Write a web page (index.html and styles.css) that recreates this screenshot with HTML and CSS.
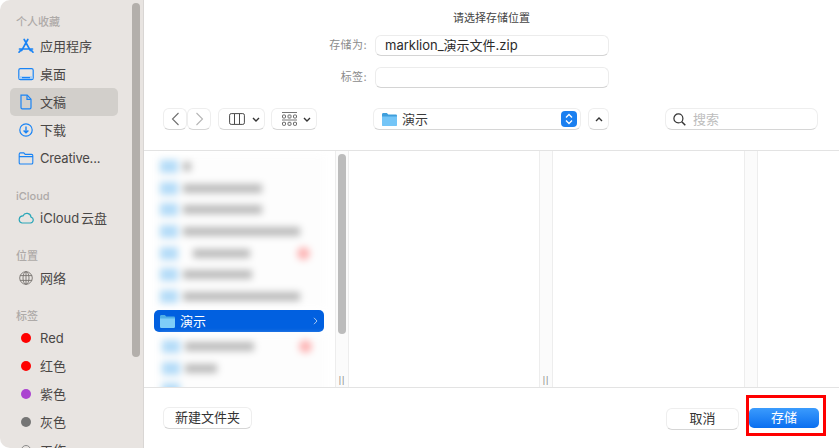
FILE: index.html
```html
<!DOCTYPE html>
<html lang="zh">
<head>
<meta charset="utf-8">
<title>存储</title>
<link rel="stylesheet" href="styles.css">
</head>
<body>
<div class="window">
  <aside class="sidebar">
    <div class="sb-label first">个人收藏</div>
    <div class="sb-row"><svg class="ic" viewBox="0 0 16 16"><path d="M9.8 1.5 3.6 12.6M6.2 1.5l6.2 11.1M1.5 11h13M1 14.2l1.4-1.6M15 14.2l-1.4-1.6" fill="none" stroke="#1a84f5" stroke-width="1.7" stroke-linecap="round"/></svg><span>应用程序</span></div>
    <div class="sb-row"><svg class="ic" viewBox="0 0 16 16"><rect x=".8" y="2.6" width="14.4" height="11" rx="1.6" fill="none" stroke="#1a84f5" stroke-width="1.2"/><path d="M1.5 10.2h13v2.7h-13z" fill="#a8cff5"/><path d="M4 11.6h8" stroke="#1a84f5" stroke-width="1.2"/></svg><span>桌面</span></div>
    <div class="sb-row selected"><svg class="ic" viewBox="0 0 16 16"><path d="M3 1.2h6.2L13 5.2v8.4a1.3 1.3 0 0 1-1.3 1.3H4.3A1.3 1.3 0 0 1 3 13.6z" fill="none" stroke="#1a84f5" stroke-width="1.2"/><path d="M9 1.5v3.8h3.8" fill="none" stroke="#1a84f5" stroke-width="1.2"/></svg><span>文稿</span></div>
    <div class="sb-row"><svg class="ic" viewBox="0 0 16 16"><circle cx="8" cy="8" r="6.2" fill="none" stroke="#1a84f5" stroke-width="1.2"/><path d="M8 4.4v6.2M5.6 8.4 8 10.8l2.4-2.4" fill="none" stroke="#1a84f5" stroke-width="1.4"/></svg><span>下载</span></div>
    <div class="sb-row"><svg class="ic" viewBox="0 0 16 16"><path d="M1.2 4.2c0-.8.5-1.3 1.2-1.3h3.4l1.4 1.5h6.4c.8 0 1.2.5 1.2 1.2v7.1c0 .8-.5 1.3-1.2 1.3H2.4c-.8 0-1.2-.5-1.2-1.3zM1.2 6.6h13.6" fill="none" stroke="#1a84f5" stroke-width="1.1"/></svg><span class="tight">Creative...</span></div>
    <div class="sb-label">iCloud</div>
    <div class="sb-row"><svg class="ic" viewBox="0 0 16 16"><path d="M4 13h8.4a3 3 0 0 0 .6-5.9A4.2 4.2 0 0 0 5 5.9 3.6 3.6 0 0 0 4 13z" fill="none" stroke="#2aa6b8" stroke-width="1.2"/></svg><span class="narrow-space">iCloud 云盘</span></div>
    <div class="sb-label">位置</div>
    <div class="sb-row"><svg class="ic" viewBox="0 0 16 16"><g fill="none" stroke="#77736f" stroke-width=".9"><circle cx="8" cy="8" r="6.3"/><ellipse cx="8" cy="8" rx="3" ry="6.3"/><path d="M2 5.6h12M2 10.4h12M8 1.7v12.6"/></g></svg><span>网络</span></div>
    <div class="sb-label">标签</div>
    <div class="sb-row"><i class="dot red"></i><span>Red</span></div>
    <div class="sb-row"><i class="dot red"></i><span>红色</span></div>
    <div class="sb-row"><i class="dot purple"></i><span>紫色</span></div>
    <div class="sb-row"><i class="dot gray"></i><span>灰色</span></div>
    <div class="sb-row"><i class="dot hollow"></i><span>工作</span></div>
    <div class="sb-thumb"></div>
  </aside>
  <main class="panel">
    <header class="head">
      <div class="title">请选择存储位置</div>
      <div class="form-row"><label>存储为:</label><div class="field">marklion_演示文件.zip</div></div>
      <div class="form-row tags"><label>标签:</label><div class="field"></div></div>
      <div class="toolbar">
        <div class="btn nav back"><svg width="9" height="14" viewBox="0 0 9 14"><path d="M7.5 1 1.5 7l6 6" fill="none" stroke="#6f6f6f" stroke-width="1.1"/></svg></div>
        <div class="btn nav fwd"><svg width="9" height="14" viewBox="0 0 9 14"><path d="M1.5 1l6 6-6 6" fill="none" stroke="#b5b5b5" stroke-width="1.1"/></svg></div>
        <div class="btn view"><svg width="16" height="12" viewBox="0 0 16 12"><rect x=".6" y=".6" width="14.8" height="10.8" rx="1.6" fill="none" stroke="#4a4a4a" stroke-width="1"/><path d="M5.5 1v10M10.5 1v10" stroke="#4a4a4a" stroke-width="1"/></svg><svg class="chev" width="8" height="5" viewBox="0 0 8 5"><path d="M1 1l3 3 3-3" fill="none" stroke="#333" stroke-width="1.4"/></svg></div>
        <div class="btn group"><svg width="15" height="14" viewBox="0 0 15 14"><path d="M0 .5h15M0 8h15" stroke="#666" stroke-width=".9"/><g fill="none" stroke="#555" stroke-width=".9"><rect x=".5" y="3" width="3" height="3" rx=".7"/><rect x="6" y="3" width="3" height="3" rx=".7"/><rect x="11.500" y="3" width="3" height="3" rx=".7"/><rect x=".5" y="10.300" width="3" height="3" rx=".7"/><rect x="6" y="10.300" width="3" height="3" rx=".7"/><rect x="11.500" y="10.300" width="3" height="3" rx=".7"/></g></svg><svg class="chev" width="8" height="5" viewBox="0 0 8 5"><path d="M1 1l3 3 3-3" fill="none" stroke="#333" stroke-width="1.4"/></svg></div>
        <div class="btn path">
          <svg class="folder" width="15" height="13" viewBox="0 0 15 13"><path d="M0 1.500C0 .6.500 0 1.400 0h3.500l1.300 1.400h7.400c.9 0 1.400.5 1.400 1.400V11.600c0 .9-.5 1.400-1.400 1.400H1.400C.5 13 0 12.500 0 11.600z" fill="#3f9fdc"/><path d="M0 3.400h15v8.200c0 .9-.5 1.400-1.400 1.400H1.400C.5 13 0 12.500 0 11.600z" fill="#74c5f7"/></svg>
          <span class="path-name">演示</span>
          <span class="stepper"><svg width="8" height="12" viewBox="0 0 8 12"><path d="M1 4.500 4 1.500l3 3M1 7.500l3 3 3-3" fill="none" stroke="#fff" stroke-width="1.300"/></svg></span>
        </div>
        <div class="btn up"><svg width="8" height="5" viewBox="0 0 8 5"><path d="M1 4l3-3 3 3" fill="none" stroke="#333" stroke-width="1.4"/></svg></div>
        <div class="btn search"><svg width="13" height="13" viewBox="0 0 13 13"><circle cx="5.400" cy="5.400" r="4.500" fill="none" stroke="#333" stroke-width="1.200"/><path d="M8.800 8.800 12.300 12.300" stroke="#333" stroke-width="1.500"/></svg><span>搜索</span></div>
      </div>
    </header>
    <section class="browser">
      <div class="col col-first">
        <div class="blur-list top">
          <div class="f-row"><i></i><b class="w1"></b></div>
          <div class="f-row"><i></i><b class="w2"></b></div>
          <div class="f-row"><i></i><b class="w2"></b></div>
          <div class="f-row"><i></i><b class="w3"></b></div>
          <div class="f-row"><i></i><b class="w4 inset"></b><u></u></div>
          <div class="f-row"><i></i><b class="w6"></b></div>
          <div class="f-row"><i></i><b class="w3"></b></div>
        </div>
        <div class="sel-row">
          <svg width="15" height="13" viewBox="0 0 15 13"><path d="M0 1.500C0 .6.500 0 1.400 0h3.500l1.300 1.400h7.400c.9 0 1.400.5 1.400 1.400V11.600c0 .9-.5 1.400-1.400 1.400H1.400C.5 13 0 12.500 0 11.600z" fill="#4faee6"/><path d="M0 3.400h15v8.200c0 .9-.5 1.400-1.400 1.400H1.400C.5 13 0 12.500 0 11.600z" fill="#7fcdf8"/></svg>
          <span>演示</span>
          <svg class="sel-chev" width="5" height="8" viewBox="0 0 5 8"><path d="M1 .8 4 4 1 7.200" fill="none" stroke="#a8c8f0" stroke-width="1"/></svg>
        </div>
        <div class="blur-list bottom">
          <div class="f-row"><i></i><b class="w6"></b><u></u></div>
          <div class="f-row"><i></i><b class="w5"></b></div>
          <div class="f-row"><i></i></div>
        </div>
      </div>
      <div class="rail"><div class="rail-thumb"></div><div class="grip">||</div></div>
      <div class="col"></div>
      <div class="rail"><div class="grip">||</div></div>
      <div class="col"></div>
      <div class="rail"></div>
      <div class="col"></div>
    </section>
    <footer class="foot">
      <div class="btn new">新建文件夹</div>
      <div class="foot-right">
        <div class="btn cancel">取消</div>
        <div class="save-wrap"><div class="save">存储</div></div>
      </div>
    </footer>
  </main>
</div>
</body>
</html>
```
FILE: styles.css
```css
* { box-sizing: border-box; }
html, body { margin: 0; height: 448px; overflow: hidden; background: #fff; }
body { font-family: Inter, "Noto Sans CJK SC", "Liberation Sans", sans-serif; font-size: 13px; line-height: 16px; color: #3b3938; }
.window { display: flex; width: 839px; height: 448px; }

.sidebar { position: relative; width: 144px; flex: none; height: 448px; overflow: hidden; padding-top: 15px; background: #e8e4e1; border-right: 1px solid #d9d6d4; border-radius: 10px 0 0 10px; }
.sb-label { height: 14px; margin: 16.5px 0 1.5px 16px; font-size: 11px; line-height: 14px; font-weight: 500; color: #aeaaa8; }
.sb-label.first { margin-top: 0; margin-bottom: 3px; }
.sb-row { display: flex; align-items: center; height: 28px; margin: 0 25px 0 10px; padding-left: 8px; border-radius: 5px; white-space: nowrap; color: #4a4746; }
.sb-row span { margin-left: 6px; }
.sb-row span.tight { letter-spacing: -.2px; }
.sb-row span.narrow-space { word-spacing: -2px; }
.sb-row.selected { background: #d2cfcb; }
.ic { width: 16px; height: 16px; flex: none; }
.dot { width: 10px; height: 10px; flex: none; margin: 0 3px; border-radius: 50%; }
.dot.red { background: #fe0000; }
.dot.purple { background: #ab43d0; }
.dot.gray { background: #757575; }
.dot.hollow { border: 1px solid #8a8a8a; }
.sb-thumb { position: absolute; left: 132px; top: 3px; width: 8px; height: 354px; border-radius: 4px; background: #b3afab; }

.panel { flex: 1; min-width: 0; display: flex; flex-direction: column; height: 448px; }
.head { height: 151px; flex: none; border-bottom: 1px solid #e3e3e3; padding-top: 11px; }
.title { height: 14px; margin-bottom: 10px; text-align: center; font-size: 11px; line-height: 14px; color: #444; }
.form-row { display: flex; align-items: center; height: 20px; margin-bottom: 12px; }
.form-row label { width: 223px; text-align: right; font-size: 11px; color: #8c8c8c; margin-right: 8px; white-space: nowrap; letter-spacing: .4px; }
.field { width: 234px; height: 21px; padding-left: 9px; border: 1px solid #ececec; border-bottom-color: #d4d4d4; border-radius: 6px; background: #fff; color: #2b2b2b; line-height: 19px; font-size: 13px; }
.toolbar { display: flex; margin: 21px 0 0 19px; height: 22px; }
.btn { display: flex; align-items: center; background: #fff; border: 1px solid #eee; border-bottom-color: #d6d6d6; border-radius: 6px; }
.nav { width: 24px; height: 22px; justify-content: center; }
.view { width: 47px; margin-left: 7px; padding-left: 10px; }
.chev { margin-left: 6px; }
.view .chev { margin-left: 7px; }
.group { width: 46px; margin-left: 6px; padding-left: 10px; }
.path { width: 208px; margin-left: 56px; padding: 0 3px 0 8px; }
.path-name { margin-left: 5px; flex: 1; color: #3a3a3a; }
.stepper { display: flex; align-items: center; justify-content: center; width: 16px; height: 16px; background: #1a7ff0; border-radius: 4px; }
.up { width: 21px; margin-left: 7px; justify-content: center; }
.search { width: 153px; margin-left: 56px; padding-left: 7px; border-radius: 7px; }
.search span { margin-left: 7px; color: #bdbdbd; }

.browser { flex: 1; min-height: 0; display: flex; }
.col { width: 190px; flex: none; }
.col:nth-child(5) { width: 191px; }
.col:last-child { flex: 1; }
.col-first { width: 191px; padding: 5px 0 0 10px; overflow: hidden; }
.rail { position: relative; width: 14px; flex: none; border: 1px solid #ededed; border-width: 0 1px; background: #fbfbfb; }
.rail-thumb { position: absolute; left: 2px; top: 3px; width: 8px; height: 180px; border-radius: 4px; background: #bcbcbc; }
.grip { position: absolute; left: 0; right: 0; bottom: 1px; text-align: center; font: 9px/12px "Liberation Sans", sans-serif; color: #8a8a8a; letter-spacing: 1px; }

.blur-list { width: 168px; background: #fdfdfd; filter: blur(3.5px); }
.blur-list.top { margin-left: 2px; height: 152px; overflow: hidden; }
.blur-list.bottom { margin: 4px 0 0 4px; }
.f-row { position: relative; display: flex; align-items: center; height: 21.6px; padding-left: 4px; }
.f-row i { width: 18px; height: 13px; flex: none; background: #b4dcf8; }
.f-row b { height: 9px; margin-left: 5px; background: #bbb; }
.f-row b.inset { margin-left: 15px; }
.f-row u { position: absolute; right: 14px; width: 13px; height: 13px; border-radius: 50%; background: #fdb4b4; }
.w1 { width: 8px; }
.w2 { width: 79px; }
.w3 { width: 117px; }
.w4 { width: 57px; }
.w5 { width: 32px; background: #ccc; }
.w6 { width: 69px; }

.sel-row { position: relative; display: flex; align-items: center; height: 22px; margin-top: 2px; width: 170px; padding: 0 6px; background: #0160e0; border-radius: 5px; color: #fff; font-size: 13px; }
.sel-row span { margin-left: 5px; flex: 1; }

.foot { height: 61px; flex: none; display: flex; justify-content: space-between; padding: 0 20px 0 19px; border-top: 1px solid #e3e3e3; }
.new { width: 89px; height: 22px; margin-top: 19px; padding-bottom: 2px; justify-content: center; font-size: 13px; color: #333; }
.foot-right { display: flex; }
.cancel { width: 73px; height: 22px; margin-top: 20px; padding-bottom: 3px; justify-content: center; color: #333; }
.save-wrap { width: 80px; height: 41px; margin: 7px -7px 0 7px; border: 3px solid #fe0000; padding: 10px 0 0 0; background: #fff; }
.save { width: 70px; height: 20px; padding-bottom: 2px; border-radius: 5px; background: linear-gradient(#3b9bfd, #0a6ff0); color: #fff; text-align: center; line-height: 18px; font-size: 13px; }
```
